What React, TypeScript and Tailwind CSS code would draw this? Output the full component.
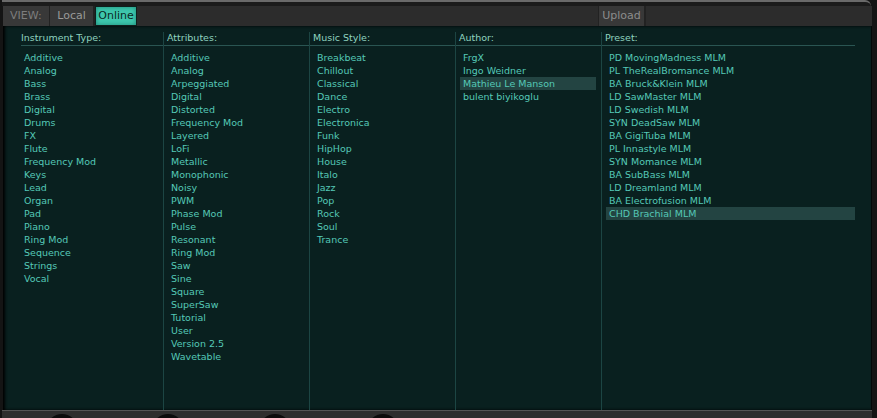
import React from 'react'

const COLUMNS: { title: string; items: string[]; selected?: string }[] = [
  {
    title: 'Instrument Type:',
    items: ['Additive', 'Analog', 'Bass', 'Brass', 'Digital', 'Drums', 'FX', 'Flute', 'Frequency Mod', 'Keys', 'Lead', 'Organ', 'Pad', 'Piano', 'Ring Mod', 'Sequence', 'Strings', 'Vocal'],
  },
  {
    title: 'Attributes:',
    items: ['Additive', 'Analog', 'Arpeggiated', 'Digital', 'Distorted', 'Frequency Mod', 'Layered', 'LoFi', 'Metallic', 'Monophonic', 'Noisy', 'PWM', 'Phase Mod', 'Pulse', 'Resonant', 'Ring Mod', 'Saw', 'Sine', 'Square', 'SuperSaw', 'Tutorial', 'User', 'Version 2.5', 'Wavetable'],
  },
  {
    title: 'Music Style:',
    items: ['Breakbeat', 'Chillout', 'Classical', 'Dance', 'Electro', 'Electronica', 'Funk', 'HipHop', 'House', 'Italo', 'Jazz', 'Pop', 'Rock', 'Soul', 'Trance'],
  },
  {
    title: 'Author:',
    items: ['FrgX', 'Ingo Weidner', 'Mathieu Le Manson', 'bulent biyikoglu'],
    selected: 'Mathieu Le Manson',
  },
  {
    title: 'Preset:',
    items: ['PD MovingMadness MLM', 'PL TheRealBromance MLM', 'BA Bruck&Klein MLM', 'LD SawMaster MLM', 'LD Swedish MLM', 'SYN DeadSaw MLM', 'BA GigiTuba MLM', 'PL Innastyle MLM', 'SYN Momance MLM', 'BA SubBass MLM', 'LD Dreamland MLM', 'BA Electrofusion MLM', 'CHD Brachial MLM'],
    selected: 'CHD Brachial MLM',
  },
]

function Column({ title, items, selected, first, last }: { title: string; items: string[]; selected?: string; first?: boolean; last?: boolean }) {
  return (
    <div className={`flex flex-col ${last ? 'w-[254px]' : 'w-[146px]'} ${first ? '' : 'border-l border-[#1c4543]'}`}>
      <div className={`h-[14px] border-b border-[#2a5552] text-[#8fd3bf] leading-[12px] ${first ? 'ml-[4px]' : 'pl-[3px]'}`}>
        {title}
      </div>
      <div className="mt-[5px] flex flex-col">
        {items.map(it => (
          <div
            key={it}
            className={`h-[13px] leading-[13px] ml-[4px] ${last ? 'mr-0' : 'mr-[5px]'} pl-[3px] whitespace-nowrap text-[#55c9b7] ${it === selected ? 'bg-[#234442]' : ''}`}
          >
            {it}
          </div>
        ))}
      </div>
    </div>
  )
}

export default function App() {
  return (
    <div
      className="w-[877px] h-[418px] overflow-hidden bg-[#141414] flex flex-col text-[9.5px]"
      style={{ fontFamily: '"DejaVu Sans", Verdana, sans-serif' }}
    >
      {/* top rim */}
      <div className="h-[6px] border-t-2 border-[#6a6a6a] bg-[#1b1b1b] mx-[2px] mr-[6px] rounded-tr-[6px] flex-shrink-0" />

      {/* tab bar */}
      <div className="h-[20px] flex ml-[3px] mr-[5px] bg-[#2c2c2c] flex-shrink-0">
        <div className="w-[47px] bg-[#383838] text-[#7d7d7d] text-[11px] flex items-center pl-[7px] border-r border-[#222]">VIEW:</div>
        <div className="w-[45px] bg-[#383838] text-[#9a9a9a] text-[11px] flex items-center justify-center border-r-2 border-[#222]">Local</div>
        <div className="w-[42px] bg-[#3ec7ad] text-[#0b2a25] text-[11px] flex items-center justify-center border border-[#0f1f1c] shadow-[inset_0_0_4px_#1f8a78]">Online</div>
        <div className="w-[462px] border-r border-[#222]" />
        <div className="w-[47px] bg-[#383838] text-[#8c8c8c] text-[11px] flex items-center justify-center border-r-2 border-[#222]">Upload</div>
        <div className="flex-1" />
      </div>

      {/* main panel */}
      <div className="h-[384px] flex ml-[3px] mr-[5px] bg-[#09201f] border-r border-[#030808] pl-[14px] pt-[6px] shadow-[inset_2px_0_3px_#000] flex-shrink-0">
        {COLUMNS.map((c, i) => (
          <Column key={c.title} {...c} first={i === 0} last={i === 4} />
        ))}
      </div>

      {/* bottom strip with knob tops */}
      <div className="flex-1 border-t border-[#555] bg-[#2e2e2e] ml-[2px] mr-[5px] flex">
        <div className="ml-[44px] w-[32px] h-[32px] mt-[3px] rounded-full bg-[#0c0c0c]" />
        <div className="ml-[74px] w-[32px] h-[32px] mt-[3px] rounded-full bg-[#0c0c0c]" />
        <div className="ml-[75px] w-[32px] h-[32px] mt-[3px] rounded-full bg-[#0c0c0c]" />
        <div className="ml-[76px] w-[32px] h-[32px] mt-[3px] rounded-full bg-[#0c0c0c]" />
      </div>
    </div>
  )
}
